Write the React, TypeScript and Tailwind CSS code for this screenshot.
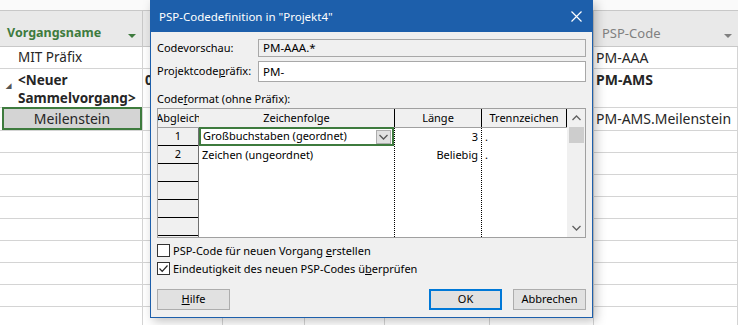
import React from "react";

const cols = ["w-[143px]", "w-[80px]", "w-[82px]", "w-[80px]", "w-[105px]", "w-[104px]", "w-[144px]"];

function Chevron({ dir, className }: { dir: "up" | "down"; className?: string }) {
  return (
    <svg width="9" height="6" viewBox="0 0 9 6" className={className}>
      <polyline
        points={dir === "down" ? "0.5,1 4.5,5 8.5,1" : "0.5,5 4.5,1 8.5,5"}
        fill="none"
        stroke="currentColor"
        strokeWidth="1.3"
      />
    </svg>
  );
}

function BgRow({ h, cells }: { h: string; cells: React.ReactNode[] }) {
  return (
    <div className={`flex shrink-0 border-b border-[#d4d4d4] ${h}`}>
      {cols.map((w, i) => (
        <div key={i} className={`${w} shrink-0 border-r border-[#d4d4d4]`}>
          {cells[i]}
        </div>
      ))}
    </div>
  );
}

function Background() {
  const empty = Array.from({ length: 9 });
  return (
    <div className="flex h-[325px] flex-col overflow-hidden bg-white font-['Noto_Sans',sans-serif] text-[13.5px] text-[#262626]">
      <div className="h-[11px] shrink-0 border-b border-[#c8c8c8] bg-[#fafafa]" />
      <div className="flex h-[36px] shrink-0 border-b border-[#c8c8c8] bg-[#e9e9e9]">
        <div className="flex w-[143px] shrink-0 items-end justify-between border-r border-[#c8c8c8] pb-[3px] pl-[7px] pr-[6px] text-[12.5px] font-bold text-[#3e7b3e]">
          Vorgangsname
          <span className="mb-[5px] h-0 w-0 border-x-[4px] border-t-[4px] border-x-transparent border-t-[#3e7b3e]" />
        </div>
        <div className="w-[80px] shrink-0 border-r border-[#c8c8c8]" />
        <div className="w-[82px] shrink-0 border-r border-[#c8c8c8]" />
        <div className="w-[80px] shrink-0 border-r border-[#c8c8c8]" />
        <div className="w-[105px] shrink-0 border-r border-[#c8c8c8]" />
        <div className="w-[104px] shrink-0 border-r border-[#c8c8c8]" />
        <div className="flex w-[144px] shrink-0 items-end justify-between pb-[3px] pl-[8px] pr-[6px] text-[13px] text-[#808080]">
          PSP-Code
          <span className="mb-[5px] h-0 w-0 border-x-[4px] border-t-[4px] border-x-transparent border-t-[#808080]" />
        </div>
      </div>
      <BgRow
        h="h-[22px]"
        cells={[
          <div className="pl-[18px] leading-[21px]">MIT Präfix</div>,
          null, null, null, null, null,
          <div className="pl-[2px] text-[14px] leading-[21px]">PM-AAA</div>,
        ]}
      />
      <BgRow
        h="h-[39px]"
        cells={[
          <div className="relative pl-[18px] pt-[2px] font-bold leading-[18px]">
            <span className="absolute left-[6px] top-[8px] text-[7px] text-[#555]">◢</span>
            &lt;Neuer
            <br />
            Sammelvorgang&gt;
          </div>,
          <div className="pl-[2px] pt-[2px] font-bold leading-[18px]">0 Tage</div>,
          null, null, null, null,
          <div className="pl-[2px] pt-[2px] text-[14px] font-bold leading-[18px]">PM-AMS</div>,
        ]}
      />
      <BgRow
        h="h-[23px]"
        cells={[
          <div className="ml-[2px] flex h-[23px] -mt-px items-center justify-center border-2 border-[#3e7b3e] bg-[#d4d4d4] text-[14px]">
            Meilenstein
          </div>,
          null, null, null, null, null,
          <div className="pl-[2px] text-[14px] leading-[22px]">PM-AMS.Meilenstein</div>,
        ]}
      />
      {empty.map((_, i) => (
        <BgRow key={i} h="h-[22px]" cells={[]} />
      ))}
    </div>
  );
}

function Checkbox({ checked, children }: { checked?: boolean; children: React.ReactNode }) {
  return (
    <div className="flex h-[13px] items-center">
      <div className="flex h-[13px] w-[13px] shrink-0 items-center justify-center border border-[#333] bg-white">
        {checked && (
          <svg width="11" height="11" viewBox="0 0 11 11">
            <polyline points="1.5,5.5 4.2,8.3 9.5,2.5" fill="none" stroke="#222" strokeWidth="1.2" />
          </svg>
        )}
      </div>
      <span className="ml-[3px] leading-[13px]">{children}</span>
    </div>
  );
}

function Dialog() {
  const rows = [1, 2, 3, 4, 5, 6];
  return (
    <div className="absolute left-[150px] top-0 flex h-[318px] w-[443px] flex-col border border-[#1d5fab] bg-[#f0f0f0] font-['Noto_Sans',sans-serif] text-[11px] text-black shadow-[3px_3px_10px_rgba(0,0,0,0.25)]">
      <div className="flex h-[31px] shrink-0 items-center justify-between bg-[#1d5fab] pl-[8px] pr-[10px] text-[11.5px] text-white">
        <span>PSP-Codedefinition in "Projekt4"</span>
        <svg width="11" height="11" viewBox="0 0 11 11">
          <path d="M0.5 0.5 L10.5 10.5 M10.5 0.5 L0.5 10.5" stroke="white" strokeWidth="1.2" />
        </svg>
      </div>
      <div className="flex flex-1 flex-col px-[6px]">
        <div className="mt-[7px] flex h-[18px] items-center">
          <span className="w-[101px] shrink-0">Codevorschau:</span>
          <div className="flex h-[18px] flex-1 items-center border border-[#a8a8a8] bg-[#f0f0f0] pl-[4px] text-[11.5px]">PM-AAA.*</div>
        </div>
        <div className="mt-[4px] flex h-[21px] items-center">
          <span className="w-[101px] shrink-0">
            Projektcode<u>p</u>räfix:
          </span>
          <div className="flex h-[21px] flex-1 items-center border border-[#a8a8a8] bg-white pl-[4px] text-[11.5px]">PM-</div>
        </div>
        <div className="mt-[8px] leading-[18px]">
          Code<u>f</u>ormat (ohne Präfix):
        </div>
        <div className="flex h-[130px] border border-[#a0a0a0] bg-white">
          <div className="flex flex-1 flex-col">
            <div className="flex h-[19px] shrink-0 border-b border-[#a0a0a0] bg-[#f0f0f0] leading-[18px]">
              <div className="flex w-[41px] shrink-0 justify-center overflow-hidden whitespace-nowrap">
                <span className="shrink-0">Abgleich</span>
              </div>
              <div className="w-[196px] shrink-0 border-r border-black text-center">Zeichenfolge</div>
              <div className="w-[87px] shrink-0 border-r border-black text-center">Länge</div>
              <div className="flex-1 border-r border-black text-center">Trennzeichen</div>
            </div>
            <div className="flex flex-1">
              <div className="flex w-[41px] shrink-0 flex-col border-r border-[#707070] bg-[#f0f0f0]">
                {rows.map((r) => (
                  <div key={r} className="h-[18px] shrink-0 border-b border-black text-center leading-[16px]">
                    {r <= 2 ? r : ""}
                  </div>
                ))}
              </div>
              <div className="flex w-[196px] shrink-0 flex-col border-r border-dotted border-black">
                <div className="-mt-px flex h-[19px] shrink-0 items-center border-2 border-[#3e7b3e] pl-[2px]">
                  <span>Großbuchstaben (geordnet)</span>
                  <div className="ml-auto mr-px flex h-[14px] w-[15px] items-center justify-center border border-[#adadad] bg-[#e1e1e1] text-[#555]">
                    <Chevron dir="down" />
                  </div>
                </div>
                <div className="h-[18px] pl-[3px] leading-[18px]">Zeichen (ungeordnet)</div>
              </div>
              <div className="flex w-[87px] shrink-0 flex-col border-r border-dotted border-black pr-[3px] text-right leading-[18px]">
                <div className="h-[18px]">3</div>
                <div className="h-[18px]">Beliebig</div>
              </div>
              <div className="flex flex-1 flex-col pl-[3px] leading-[18px]">
                <div className="h-[18px]">.</div>
                <div className="h-[18px]">.</div>
              </div>
            </div>
          </div>
          <div className="flex w-[18px] shrink-0 flex-col items-center bg-[#f0f0f0] text-[#606060]">
            <div className="flex h-[18px] items-center justify-center">
              <Chevron dir="up" />
            </div>
            <div className="h-[16px] w-[15px] bg-[#cdcdcd]" />
            <div className="flex-1" />
            <div className="flex h-[18px] items-center justify-center">
              <Chevron dir="down" />
            </div>
          </div>
        </div>
        <div className="mt-[6px] flex flex-col gap-[5px]">
          <Checkbox>
            PSP-Code für neuen Vorgang <u>e</u>rstellen
          </Checkbox>
          <Checkbox checked>
            Eindeutigkeit des neuen PSP-Codes ü<u>b</u>erprüfen
          </Checkbox>
        </div>
        <div className="mt-[14px] flex h-[21px] items-stretch">
          <div className="flex w-[73px] items-center justify-center border border-[#adadad] bg-[#e1e1e1]">
            <span>
              <u>H</u>ilfe
            </span>
          </div>
          <div className="ml-auto flex w-[73px] items-center justify-center border-2 border-[#0078d7] bg-[#e1e1e1]">OK</div>
          <div className="ml-[11px] flex w-[73px] items-center justify-center border border-[#adadad] bg-[#e1e1e1]">
            Abbrechen
          </div>
        </div>
      </div>
    </div>
  );
}

export default function App() {
  return (
    <div className="relative h-[325px] w-[738px] overflow-hidden">
      <Background />
      <Dialog />
    </div>
  );
}
